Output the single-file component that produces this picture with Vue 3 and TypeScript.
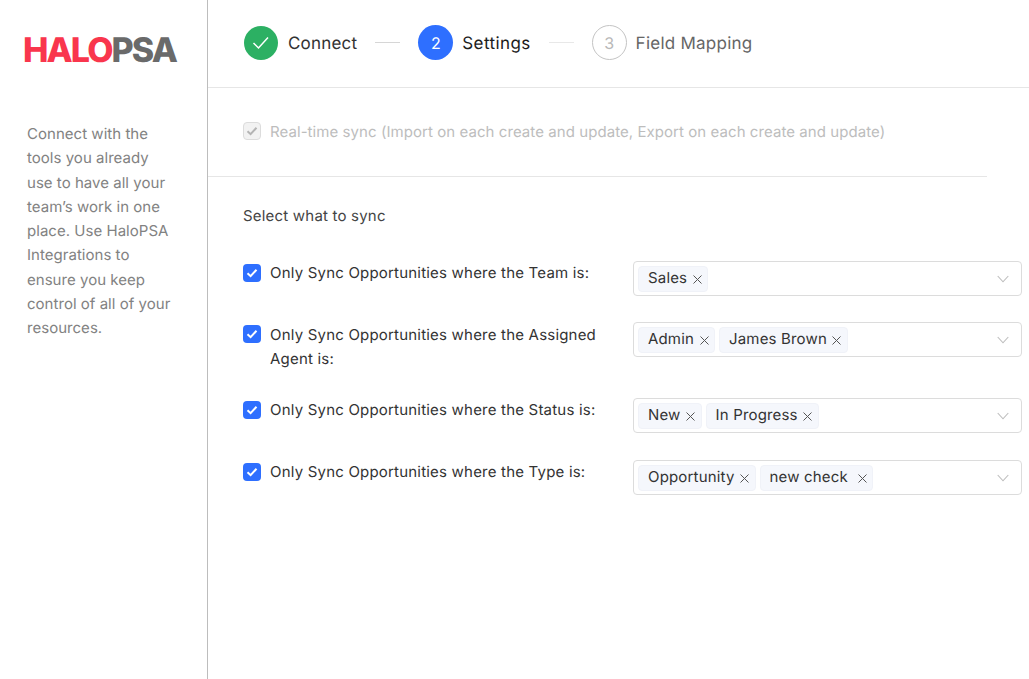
<script setup lang="ts">
interface Step { label: string; state: 'done' | 'active' | 'todo'; num: number }
const steps: Step[] = [
  { label: 'Connect', state: 'done', num: 1 },
  { label: 'Settings', state: 'active', num: 2 },
  { label: 'Field Mapping', state: 'todo', num: 3 },
]
const rows = [
  { label: 'Only Sync Opportunities where the Team is:', tags: ['Sales'] },
  { label: 'Only Sync Opportunities where the Assigned Agent is:', tags: ['Admin', 'James Brown'] },
  { label: 'Only Sync Opportunities where the Status is:', tags: ['New', 'In Progress'] },
  { label: 'Only Sync Opportunities where the Type is:', tags: ['Opportunity', 'new check\u00a0'] },
]
</script>

<template>
  <div class="page">
    <aside class="side">
      <div class="logo"><span class="halo">HALO</span><span class="psa">PSA</span></div>
      <p class="blurb">Connect with the tools you already use to have all your team’s work in one place. Use HaloPSA Integrations to ensure you keep control of all of your resources.</p>
    </aside>
    <main class="main">
      <header class="steps">
        <template v-for="(s, i) in steps" :key="s.label">
          <span v-if="i > 0" class="connector" :class="{ faint: i === 2 }"></span>
          <div class="step" :class="s.state">
            <span class="dot">
              <svg v-if="s.state === 'done'" width="18" height="18" viewBox="0 0 18 18" fill="none"><path d="M1.5 9 6.5 14 16 3.5" stroke="#fff" stroke-width="1.5"/></svg>
              <template v-else>{{ s.num }}</template>
            </span>
            <span class="step-label">{{ s.label }}</span>
          </div>
        </template>
      </header>
      <section class="realtime">
        <span class="box disabled">
          <svg width="12" height="12" viewBox="0 0 12 12" fill="none"><path d="M1.5 6.3 4.6 9.2 10.5 2.8" stroke="#b4b4b4" stroke-width="2"/></svg>
        </span>
        <span class="realtime-text">Real-time sync (Import on each create and update, Export on each create and update)</span>
      </section>
      <section class="filters">
        <h2 class="title">Select what to sync</h2>
        <div class="row" v-for="r in rows" :key="r.label">
          <div class="check-label">
            <span class="box on">
              <svg width="12" height="12" viewBox="0 0 12 12" fill="none"><path d="M1.5 6.3 4.6 9.2 10.5 2.8" stroke="#fff" stroke-width="2"/></svg>
            </span>
            <span class="label">{{ r.label }}</span>
          </div>
          <div class="select">
            <span class="tag" v-for="t in r.tags" :key="t">{{ t }}
              <svg class="x" width="9" height="9" viewBox="0 0 9 9" fill="none"><path d="M.5.5l8 8M8.500.5l-8 8" stroke="#555" stroke-width="1"/></svg>
            </span>
            <svg class="chev" width="12" height="8" viewBox="0 0 12 8" fill="none"><path d="M.7 1 6 6.8 11.3 1" stroke="#bdbdbd" stroke-width="1.1"/></svg>
          </div>
        </div>
      </section>
    </main>
  </div>
</template>

<style>
html, body { margin: 0; background: #fff; overflow: hidden; }
</style>

<style scoped>
.page {
  display: flex;
  width: 1029px;
  height: 679px;
  font-family: Inter, "Liberation Sans", sans-serif;
  font-size: 15px;
  color: #333;
  background: #fff;
  overflow: hidden;
  text-rendering: geometricPrecision;
}
.side {
  width: 207px;
  flex: none;
  box-sizing: content-box;
  border-right: 1px solid #bdbdbd;
}
.logo {
  margin: 33px 0 0 23px;
  height: 35px;
  line-height: 35px;
  font-weight: 800;
  font-size: 34px;
  letter-spacing: -1.9px;
  white-space: nowrap;
}
.halo { color: #f9364d; }
.psa { color: #6a6a6a; }
.blurb {
  margin: 54px 0 0 27px;
  width: 150px;
  font-size: 15px;
  line-height: 24.25px;
  color: #828282;
  letter-spacing: 0.03px;
}
.main { flex: 1; min-width: 0; }
.steps {
  display: flex;
  align-items: center;
  height: 85px;
  padding: 0 0 2px 36px;
  border-bottom: 1px solid #e6e6e6;
}
.step { display: flex; align-items: center; }
.dot {
  width: 35px;
  height: 35px;
  border-radius: 50%;
  display: flex;
  align-items: center;
  justify-content: center;
  box-sizing: border-box;
  font-size: 16px;
  flex: none;
}
.done .dot { width: 34px; height: 34px; background: #2cb063; }
.active .dot { background: #2e6fff; color: #fff; }
.todo .dot { border: 1px solid #c4c4c4; color: #b8b8b8; }
.step-label { margin: 2px 0 0 9px; font-size: 17px; letter-spacing: 0.2px; color: #333; }
.done .step-label { margin-left: 10px; }
.active .step-label { color: #1c1c1c; letter-spacing: 0.4px; }
.todo .step-label { color: #666; letter-spacing: 0.25px; }
.connector { width: 25px; height: 1px; background: #d6d6d6; margin: 0 18px; }
.connector.faint { background: #e8e8e8; }
.realtime {
  display: flex;
  align-items: center;
  height: 86px;
  width: 744px;
  padding: 0 0 2px 35px;
  border-bottom: 1px solid #e6e6e6;
}
.box {
  width: 18px;
  height: 18px;
  flex: none;
  box-sizing: border-box;
  border-radius: 4px;
  display: flex;
  align-items: center;
  justify-content: center;
}
.box.disabled { background: #f2f2f2; border: 1px solid #dcdcdc; }
.box.on { background: #2e6fff; margin-top: 3px; }
.realtime-text { margin-left: 9px; color: #bdbdbd; letter-spacing: 0.065px; }
.filters { padding: 30px 7px 0 35px; }
.title { margin: 0 0 36px; font-size: 15px; line-height: 18px; font-weight: 400; color: #444; letter-spacing: 0.2px; }
.row { display: flex; justify-content: space-between; margin-bottom: 27px; }
.row:nth-child(2) { margin-bottom: 26px; }
.row:nth-child(3) .label { margin-top: 1px; }
.check-label { display: flex; align-items: flex-start; width: 360px; }
.label { margin-left: 9px; line-height: 24px; color: #333; letter-spacing: 0.2px; }
.select {
  position: relative;
  width: 389px;
  height: 35px;
  flex: none;
  box-sizing: border-box;
  border: 1px solid #dcdcdc;
  border-radius: 4px;
  display: flex;
  align-items: center;
  gap: 4px;
  padding-left: 4px;
}
.tag {
  display: inline-flex;
  align-items: center;
  height: 26px;
  box-sizing: border-box;
  padding: 0 5.5px 2px 9px;
  border: 1px solid #f0f2f8;
  border-radius: 4px;
  background: #f5f7fc;
  color: #333;
  white-space: nowrap;
  letter-spacing: 0.17px;
}
.x { margin-left: 5.5px; margin-top: 3px; }
.chev { position: absolute; right: 12px; top: 13px; }
</style>
